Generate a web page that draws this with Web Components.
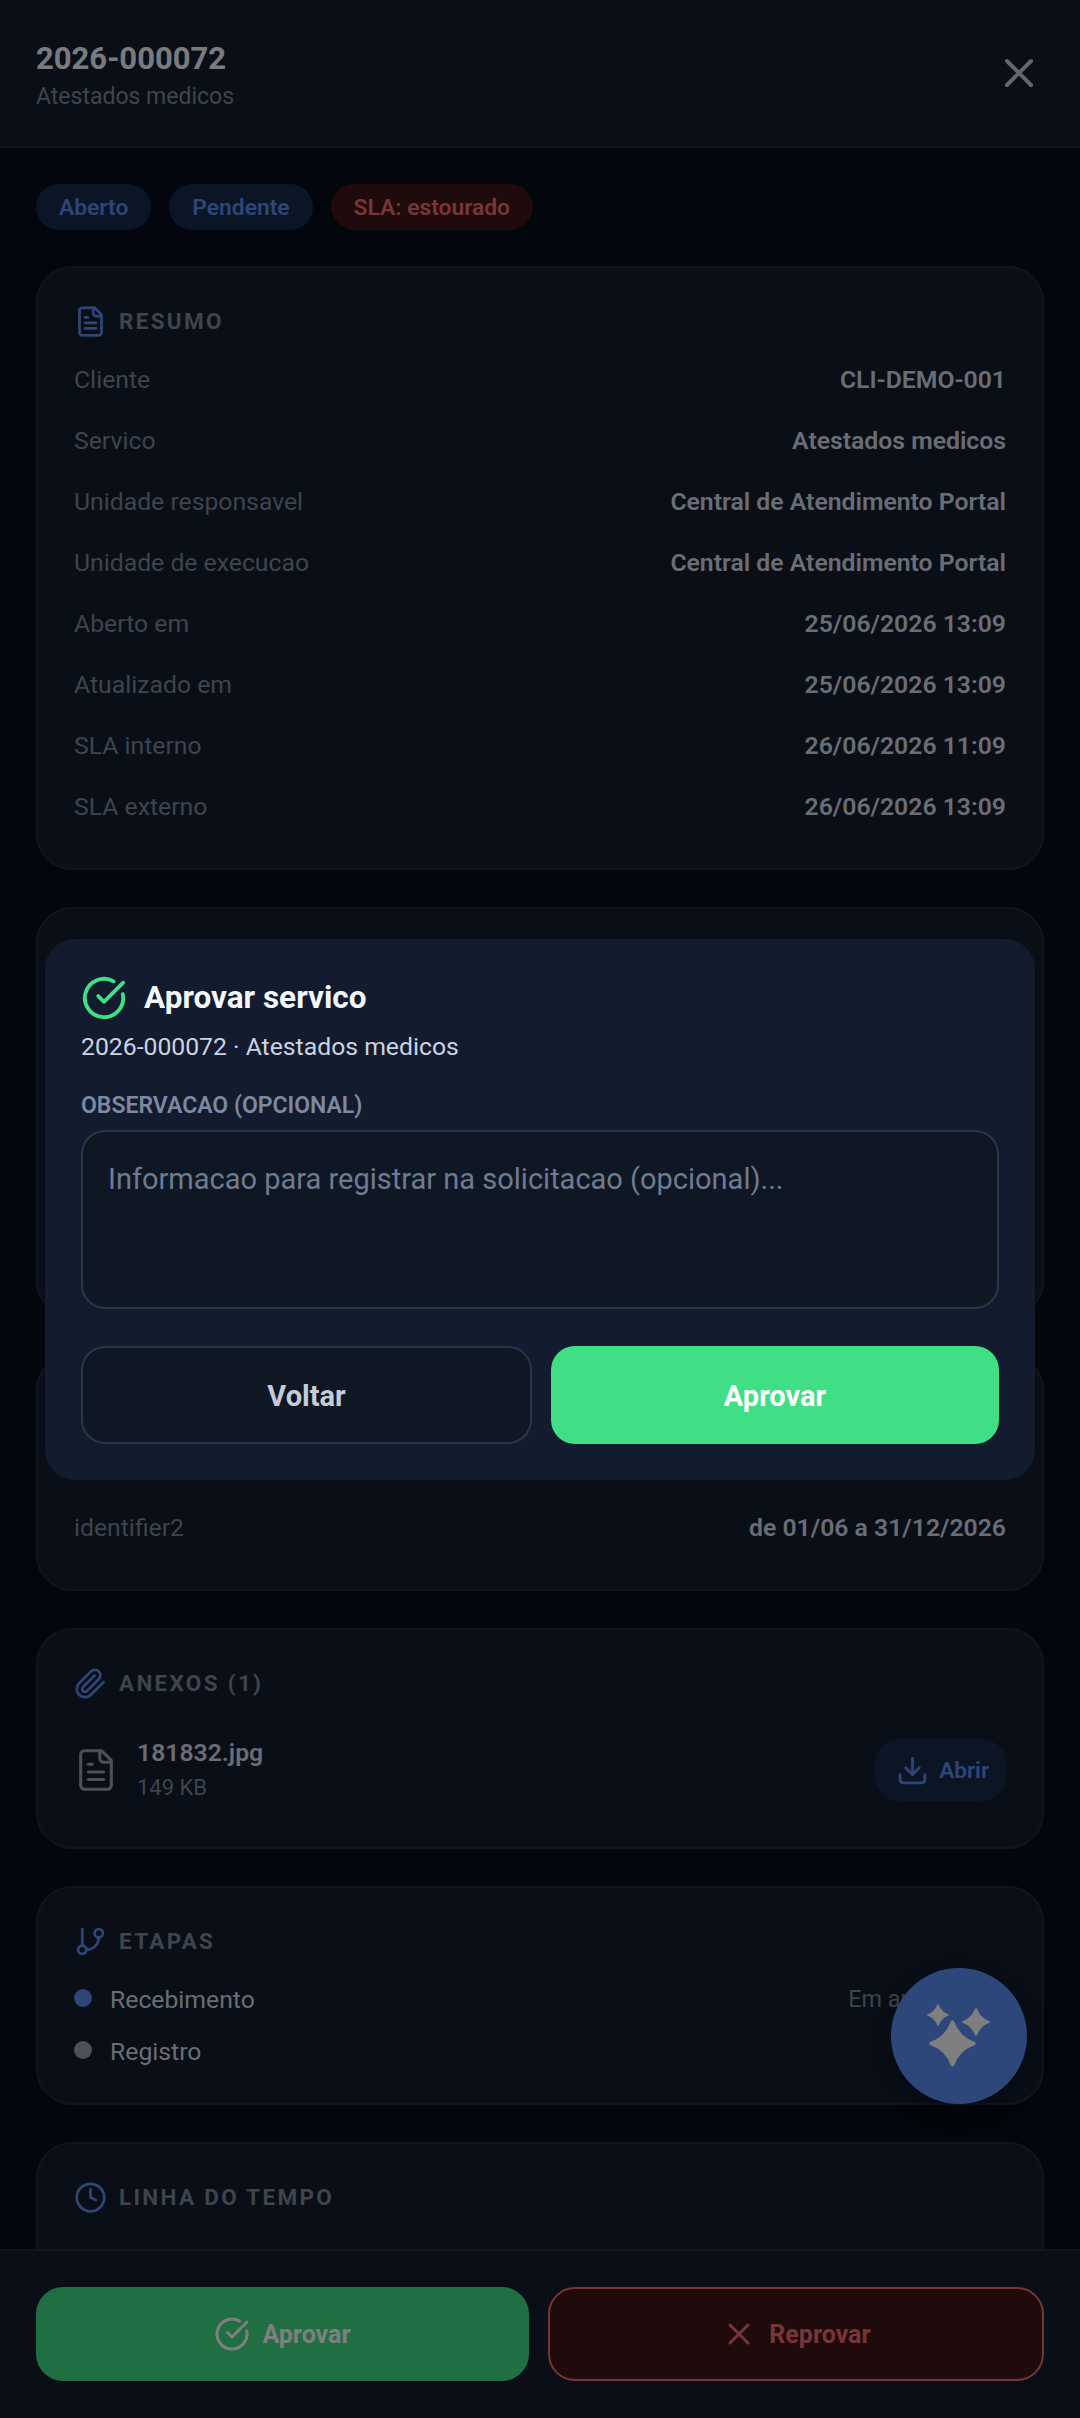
<!DOCTYPE html>
<html lang="pt">
<head>
<meta charset="utf-8">
<title>2026-000072</title>
<style>
  html, body { margin: 0; height: 100%; background: #060d18; }
  body { font-family: Roboto, "Liberation Sans", sans-serif; }
</style>
</head>
<body>
<detail-page></detail-page>

<script>
// Small icon set, stroked on a 24 box
const ICONS = {
    file: '<path d="M15 2H6a2 2 0 0 0-2 2v16a2 2 0 0 0 2 2h12a2 2 0 0 0 2-2V7Z"/><path d="M14 2v4a2 2 0 0 0 2 2h4"/><path d="M10 9H8"/><path d="M16 13H8"/><path d="M16 17H8"/>',
    clip: '<path d="m21.44 11.05-9.19 9.19a6 6 0 0 1-8.49-8.49l8.57-8.57A4 4 0 1 1 18 8.84l-8.59 8.57a2 2 0 0 1-2.83-2.83l8.49-8.48"/>',
    branch: '<line x1="6" y1="3" x2="6" y2="15"/><circle cx="18" cy="6" r="3"/><circle cx="6" cy="18" r="3"/><path d="M18 9a9 9 0 0 1-9 9"/>',
    clock: '<circle cx="12" cy="12" r="10"/><polyline points="12 6 12 12 16 14"/>',
    close: '<path d="M18 6 6 18"/><path d="m6 6 12 12"/>',
    download: '<path d="M21 15v4a2 2 0 0 1-2 2H5a2 2 0 0 1-2-2v-4"/><polyline points="7 10 12 15 17 10"/><line x1="12" y1="15" x2="12" y2="3"/>',
    check: '<path d="M21.8 10A10 10 0 1 1 17 3.34"/><path d="m9 11 3 3L22 4"/>'
};

function icon(name, size, width) {
    return `<svg width="${size}" height="${size}" viewBox="0 0 24 24" fill="none" stroke="currentColor" stroke-width="${width || 2}" stroke-linecap="round" stroke-linejoin="round">${ICONS[name]}</svg>`;
}

// four point star with soft tips, for the assistant button
function star(x, y, r) {
    return `<path transform="translate(${x} ${y}) scale(${r})" d="M0 -.9Q.24 -.24 .9 0Q.24 .24 0 .9Q-.24 .24 -.9 0Q-.24 -.24 0 -.9Z" stroke="currentColor" stroke-width=".16" stroke-linejoin="round"/>`;
}

class StatusChip extends HTMLElement {
    constructor() {
        super();
        const tone = this.getAttribute('tone') === 'red' ? 'red' : 'blue';
        this.attachShadow({ mode: 'open' }).innerHTML = `
            <style>
                :host {
                    display: inline-flex;
                    align-items: center;
                    height: 46px;
                    padding: 0 23px;
                    border-radius: 23px;
                    font-size: 22.8px;
                    font-weight: 600;
                    background: ${tone === 'red' ? '#3e1618' : '#172a4c'};
                    color: ${tone === 'red' ? '#ef6b70' : '#5b8def'};
                }
            </style>
            <slot></slot>`;
    }
}
customElements.define('status-chip', StatusChip);

class InfoCard extends HTMLElement {
    constructor() {
        super();
        const title = this.getAttribute('heading');
        const name = this.getAttribute('icon');
        this.attachShadow({ mode: 'open' }).innerHTML = `
            <style>
                :host {
                    display: block;
                    flex: none;
                    box-sizing: border-box;
                    padding: 31px 36px 33px;
                    background: #121c2e;
                    border: 2px solid #1f2a3e;
                    border-radius: 36px;
                }
                .head {
                    display: flex;
                    align-items: center;
                    gap: 12px;
                    height: 44px;
                    margin-bottom: 6px;
                    font-size: 22.5px;
                    font-weight: 700;
                    letter-spacing: 2.3px;
                    color: #7e889a;
                }
                .head svg { color: #5b8def; flex: none; }
            </style>
            ${title ? `<div class="head">${icon(name, 33)}<span>${title}</span></div>` : ''}
            <slot></slot>`;
    }
}
customElements.define('info-card', InfoCard);

class InfoRow extends HTMLElement {
    constructor() {
        super();
        this.attachShadow({ mode: 'open' }).innerHTML = `
            <style>
                :host {
                    display: flex;
                    justify-content: space-between;
                    align-items: center;
                    height: 61px;
                    font-size: 24.75px;
                    color: #7e889a;
                }
                b { font-weight: 600; color: #d4dae6; }
            </style>
            <span>${this.getAttribute('label')}</span>
            <b><slot></slot></b>`;
    }
}
customElements.define('info-row', InfoRow);

class AttachmentRow extends HTMLElement {
    constructor() {
        super();
        this.attachShadow({ mode: 'open' }).innerHTML = `
            <style>
                :host { display: flex; align-items: center; gap: 18px; margin-top: 30px; color: #e8eef9; }
                .ic { color: #98a1b1; display: flex; margin-left: -1px; }
                .txt { flex: 1; min-width: 0; }
                .name { font-size: 24.75px; font-weight: 600; color: #d4dae6; line-height: 36px; }
                .size { font-size: 22px; color: #7e889a; line-height: 34px; }
                .open {
                    display: flex;
                    align-items: center;
                    gap: 10px;
                    height: 62px;
                    padding: 0 17px 0 21px;
                    border-radius: 24px;
                    background: #172a4c;
                    color: #5b8def;
                    font-size: 22.5px;
                    font-weight: 600;
                }
            </style>
            <span class="ic">${icon('file', 46, 1.6)}</span>
            <div class="txt">
                <div class="name">${this.getAttribute('name')}</div>
                <div class="size">${this.getAttribute('size')}</div>
            </div>
            <div class="open">${icon('download', 33)}<span>Abrir</span></div>`;
    }
}
customElements.define('attachment-row', AttachmentRow);

class StepRow extends HTMLElement {
    constructor() {
        super();
        const active = this.hasAttribute('active');
        this.attachShadow({ mode: 'open' }).innerHTML = `
            <style>
                :host {
                    display: flex;
                    align-items: center;
                    gap: 18px;
                    height: 52px;
                    font-size: 24.75px;
                    color: #d4dae6;
                }
                i { width: 18px; height: 18px; margin-top: -3px; border-radius: 50%; background: ${active ? '#5b8def' : '#98a1b1'}; }
                span { flex: 1; }
                small { font-size: 23.4px; color: #7e889a; }
            </style>
            <i></i><span><slot></slot></span>
            ${this.getAttribute('note') ? `<small>${this.getAttribute('note')}</small>` : ''}`;
    }
}
customElements.define('step-row', StepRow);

class ApproveDialog extends HTMLElement {
    constructor() {
        super();
        this.attachShadow({ mode: 'open' }).innerHTML = `
            <style>
                :host {
                    display: block;
                    box-sizing: border-box;
                    width: 990px;
                    padding: 36px;
                    background: #121c2e;
                    border-radius: 30px;
                }
                .title { display: flex; align-items: center; gap: 17px; font-size: 31.5px; font-weight: 700; color: #f4f7fd; height: 46px; }
                .title svg { color: #40de85; flex: none; }
                .sub { font-size: 24.75px; color: #ccd3e0; margin-top: 8px; line-height: 36px; }
                label { display: block; font-size: 23px; font-weight: 600; color: #7d89a0; margin-top: 26px; line-height: 30px; }
                .box {
                    box-sizing: border-box;
                    height: 179px;
                    margin-top: 9px;
                    padding: 28px 25px 0;
                    background: #0f1724;
                    border: 2px solid #2a3548;
                    border-radius: 24px;
                    font-size: 29px;
                    line-height: 38px;
                    color: #6f7b90;
                }
                .actions { display: grid; grid-template-columns: 451px 1fr; gap: 19px; margin-top: 37px; }
                .btn {
                    display: flex;
                    align-items: center;
                    justify-content: center;
                    box-sizing: border-box;
                    height: 98px;
                    padding-top: 2px;
                    border-radius: 24px;
                    font-size: 29px;
                    font-weight: 700;
                }
                .back { background: #0f1724; border: 2px solid #2a3548; color: #c4ccdb; }
                .ok { background: #40de85; color: #fff; }
            </style>
            <div class="title">${icon('check', 46)}<span>Aprovar servico</span></div>
            <div class="sub">2026-000072 · Atestados medicos</div>
            <label>OBSERVACAO (OPCIONAL)</label>
            <div class="box">Informacao para registrar na solicitacao (opcional)...</div>
            <div class="actions">
                <div class="btn back">Voltar</div>
                <div class="btn ok">Aprovar</div>
            </div>`;
    }
}
customElements.define('approve-dialog', ApproveDialog);

class DetailPage extends HTMLElement {
    constructor() {
        super();
        this.attachShadow({ mode: 'open' }).innerHTML = `
            <style>
                :host {
                    display: flex;
                    flex-direction: column;
                    position: relative;
                    height: 2418px;
                    overflow: hidden;
                    background: #060d18;
                }
                header {
                    flex: none;
                    display: flex;
                    align-items: center;
                    justify-content: space-between;
                    box-sizing: border-box;
                    height: 148px;
                    padding: 4px 36px 0;
                    background: #121c2e;
                    border-bottom: 2px solid #1f2a3e;
                }
                h1 { margin: 0; font-size: 31px; font-weight: 700; line-height: 40px; color: #f4f7fd; }
                header p { margin: 3px 0 0; font-size: 23px; line-height: 30px; color: #7e889a; }
                header svg { color: #c4ccdb; margin: -4px 1px 0 0; }
                main {
                    flex: 1;
                    min-height: 0;
                    overflow: hidden;
                    display: flex;
                    flex-direction: column;
                    gap: 37px;
                    padding: 36px;
                }
                .chips { display: flex; gap: 18px; flex: none; margin-bottom: -1px; }
                .c1 { height: 604px; }
                .c2 { height: 410px; }
                .c3 { height: 237px; padding-bottom: 31px; display: flex; flex-direction: column; justify-content: flex-end; }
                .c4 { height: 221px; }
                .c5 { height: 219px; }
                .c5 step-row:first-child { margin-top: 10px; }
                .c6 { height: 300px; }
                footer {
                    flex: none;
                    display: grid;
                    grid-template-columns: 493px 1fr;
                    gap: 19px;
                    box-sizing: border-box;
                    height: 169px;
                    padding: 36px 36px 37px;
                    background: #121c2e;
                    border-top: 2px solid #1f2a3e;
                }
                .act {
                    display: flex;
                    align-items: center;
                    justify-content: center;
                    gap: 12px;
                    box-sizing: border-box;
                    border-radius: 27px;
                    font-size: 25px;
                    font-weight: 700;
                }
                .approve { background: #40de85; color: #fff; }
                .reject { background: #3e1618; border: 2px solid #ef6b70; color: #ef6b70; }
                .fab {
                    position: absolute;
                    left: 891px;
                    top: 1968px;
                    width: 136px;
                    height: 136px;
                    border-radius: 50%;
                    background: #5a8ff5;
                    color: #fff;
                    box-shadow: 0 8px 24px rgba(0,0,0,.25);
                }
                .fab svg { display: block; }
                .scrim {
                    position: absolute;
                    inset: 0;
                    background: rgba(0,0,0,.5);
                    display: flex;
                    align-items: center;
                    justify-content: center;
                }
            </style>
            <header>
                <div>
                    <h1>2026-000072</h1>
                    <p>Atestados medicos</p>
                </div>
                ${icon('close', 48, 2)}
            </header>
            <main>
                <div class="chips">
                    <status-chip>Aberto</status-chip>
                    <status-chip>Pendente</status-chip>
                    <status-chip tone="red">SLA: estourado</status-chip>
                </div>
                <info-card class="c1" heading="RESUMO" icon="file">
                    <info-row label="Cliente">CLI-DEMO-001</info-row>
                    <info-row label="Servico">Atestados medicos</info-row>
                    <info-row label="Unidade responsavel">Central de Atendimento Portal</info-row>
                    <info-row label="Unidade de execucao">Central de Atendimento Portal</info-row>
                    <info-row label="Aberto em">25/06/2026 13:09</info-row>
                    <info-row label="Atualizado em">25/06/2026 13:09</info-row>
                    <info-row label="SLA interno">26/06/2026 11:09</info-row>
                    <info-row label="SLA externo">26/06/2026 13:09</info-row>
                </info-card>
                <info-card class="c2"></info-card>
                <info-card class="c3">
                    <info-row label="identifier2">de 01/06 a 31/12/2026</info-row>
                </info-card>
                <info-card class="c4" heading="ANEXOS (1)" icon="clip">
                    <attachment-row name="181832.jpg" size="149 KB"></attachment-row>
                </info-card>
                <info-card class="c5" heading="ETAPAS" icon="branch">
                    <step-row active note="Em andamento">Recebimento</step-row>
                    <step-row>Registro</step-row>
                </info-card>
                <info-card class="c6" heading="LINHA DO TEMPO" icon="clock"></info-card>
            </main>
            <footer>
                <div class="act approve">${icon('check', 36)}<span>Aprovar</span></div>
                <div class="act reject">${icon('close', 36)}<span>Reprovar</span></div>
            </footer>
            <div class="fab">
                <svg width="136" height="136" viewBox="0 0 136 136" fill="currentColor">
                    ${star(61.5, 75.5, 23.5)}${star(47, 47, 11)}${star(85, 54, 14)}
                </svg>
            </div>
            <div class="scrim"><approve-dialog></approve-dialog></div>`;
    }
}
customElements.define('detail-page', DetailPage);
</script>
</body>
</html>
